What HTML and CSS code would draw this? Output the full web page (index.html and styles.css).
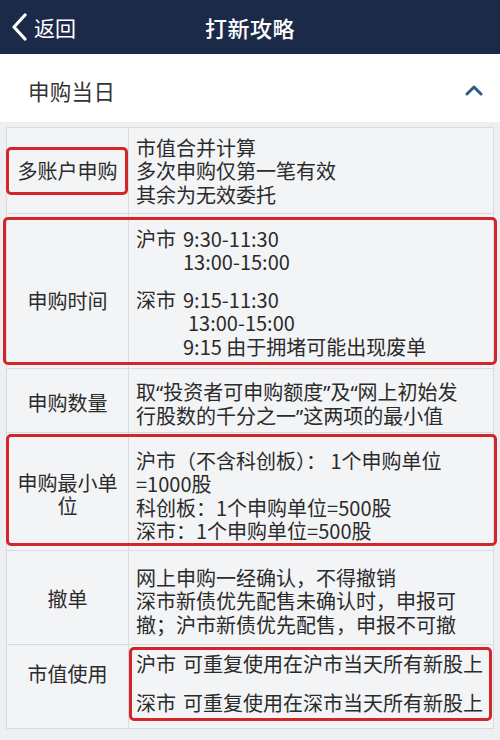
FILE: index.html
```html
<!DOCTYPE html>
<html lang="zh-CN">
<head>
<meta charset="utf-8">
<title>打新攻略</title>
<link rel="stylesheet" href="styles.css">
</head>
<body>
  <header class="topbar">
    <a class="back">
      <svg class="back-icon" width="18" height="28" viewBox="0 0 18 28"><path d="M15 2 L4 14 L15 26" fill="none" stroke="#fff" stroke-width="3.2" stroke-linecap="round" stroke-linejoin="round"/></svg>
      <span>返回</span>
    </a>
    <h1 class="title">打新攻略</h1>
    <span></span>
  </header>

  <section class="panel-head">
    <h2>申购当日</h2>
    <svg class="fold" width="18" height="12" viewBox="0 0 18 12"><path d="M2 10 L9 3 L16 10" fill="none" stroke="#2d5b86" stroke-width="3" stroke-linecap="round" stroke-linejoin="round"/></svg>
  </section>

  <div class="sheet">
    <div class="row r1">
      <div class="label">多账户申购</div>
      <div class="value">
        <div>市值合并计算</div>
        <div>多次申购仅第一笔有效</div>
        <div>其余为无效委托</div>
      </div>
      <span class="mark m1"></span>
    </div>

    <div class="row r2">
      <div class="label">申购时间</div>
      <div class="value">
        <div><span class="mkt">沪市</span>9:30-11:30</div>
        <div class="indent">13:00-15:00</div>
        <div class="gap"><span class="mkt">深市</span>9:15-11:30</div>
        <div class="indent wide">13:00-15:00</div>
        <div class="indent">9:15 由于拥堵可能出现废单</div>
      </div>
      <span class="mark m2"></span>
    </div>

    <div class="row r3">
      <div class="label">申购数量</div>
      <div class="value">
        <div>取<span class="q">“</span>投资者可申购额度<span class="q">”</span>及<span class="q">“</span>网上初始发</div>
        <div>行股数的千分之一<span class="q">”</span>这两项的最小值</div>
      </div>
    </div>

    <div class="row r4">
      <div class="label">申购最小单位</div>
      <div class="value">
        <div>沪市（不含科创板）： 1个申购单位</div>
        <div>=1000股</div>
        <div>科创板：1个申购单位=500股</div>
        <div>深市：1个申购单位=500股</div>
      </div>
      <span class="mark m3"></span>
    </div>

    <div class="row r5">
      <div class="label">撤单</div>
      <div class="value">
        <div>网上申购一经确认，不得撤销</div>
        <div>深市新债优先配售未确认时，申报可</div>
        <div>撤；沪市新债优先配售，申报不可撤</div>
      </div>
    </div>

    <div class="row r6">
      <div class="label">市值使用</div>
      <div class="value">
        <div><span class="mkt">沪市</span>可重复使用在沪市当天所有新股上</div>
        <div class="gap-lg"><span class="mkt">深市</span>可重复使用在深市当天所有新股上</div>
      </div>
      <span class="mark m4"></span>
    </div>
  </div>
</body>
</html>
```

FILE: styles.css
```css
* {
  box-sizing: border-box;
}

html,
body {
  margin: 0;
  padding: 0;
}

body {
  width: 500px;
  height: 740px;
  overflow: hidden;
  background: #eeeff2;
  font-family: "Noto Sans CJK SC", "Noto Sans", sans-serif;
  color: #2b2b2b;
}

/* top navigation bar */
.topbar {
  height: 54px;
  background: #1c2a49;
  display: grid;
  grid-template-columns: 1fr auto 1fr;
  align-items: center;
  color: #fff;
}

.back {
  display: flex;
  align-items: center;
  padding-left: 10px;
  font-size: 21px;
  line-height: 1;
}

.back-icon {
  margin-right: 6px;
}

.title {
  margin: 0;
  font-size: 22px;
  font-weight: 500;
  line-height: 1;
  letter-spacing: 0.5px;
}

/* collapsible section header */
.panel-head {
  height: 68px;
  background: #fff;
  display: flex;
  align-items: center;
  justify-content: space-between;
  padding: 4px 17px 0 28px;
  margin-bottom: 5px;
}

.panel-head h2 {
  margin: 0;
  font-size: 21.5px;
  font-weight: 400;
  color: #333;
  letter-spacing: 0.3px;
}

/* rules table */
.sheet {
  margin-left: 6px;
  width: 488px;
  border: 1px solid #d8dce1;
  background: #f3f4f6;
  font-size: 20px;
  line-height: 23.5px;
}

.row {
  position: relative;
  display: grid;
  grid-template-columns: 122px 1fr;
  border-top: 1px solid #d8dce1;
}

.row:first-child {
  border-top: 0;
}

.label {
  border-right: 1px solid #d8dce1;
  text-align: center;
  padding: var(--lt) 8px 0;
}

.value {
  padding: var(--vt) 4px 0 7px;
  white-space: nowrap;
}

.mkt {
  display: inline-block;
  width: 47px;
}

.indent {
  padding-left: 47px;
}

.indent.wide {
  padding-left: 52px;
}

.gap {
  margin-top: 14px;
}

.gap-lg {
  margin-top: 15.5px;
}

.q {
  font-family: "Noto Sans", sans-serif;
}

.r1 { height: 85px; --lt: 30.5px; --vt: 7.5px; }
.r2 { height: 155px; --lt: 75px; --vt: 12.5px; }
.r3 { height: 64px; --lt: 21.5px; --vt: 10.5px; }
.r4 { height: 118px; --lt: 37.5px; --vt: 15.5px; }
.r5 { height: 94px; --lt: 35.5px; --vt: 14.5px; }
.r6 { height: 84px; --lt: 16.5px; --vt: 6.5px; }

/* red highlight frames drawn over the rows */
.mark {
  position: absolute;
  border: 3px solid #d3262b;
  border-radius: 5px;
  pointer-events: none;
}

.m1 { left: -1px; top: 19px; width: 122px; height: 48px; }
.m2 { left: -4px; right: -4px; top: 3px; bottom: 3px; }
.m3 { left: -1px; right: -4px; top: 1px; bottom: 4px; }
.m4 { left: 122px; right: 1px; top: 2px; bottom: 7px; }
```
